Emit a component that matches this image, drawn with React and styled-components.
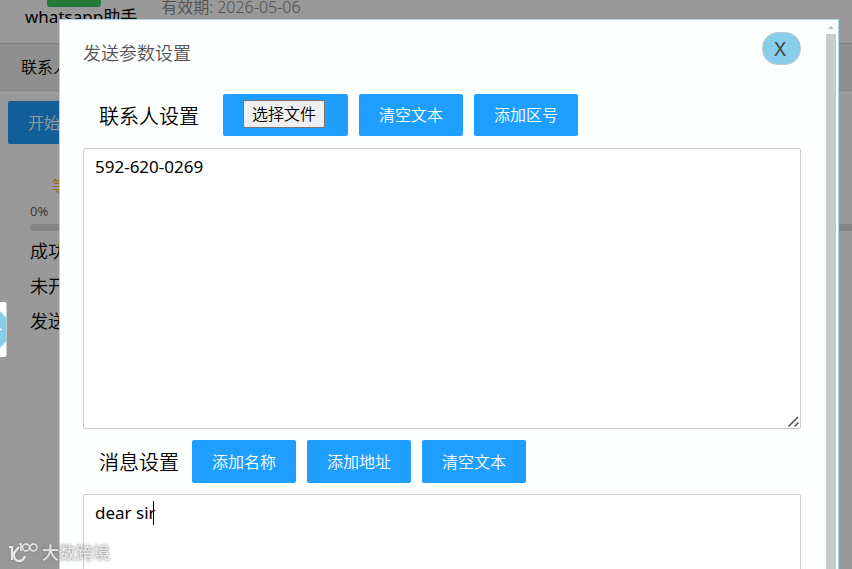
import { useRef, useState } from "react";
import styled, { createGlobalStyle } from "styled-components";

const GlobalStyle = createGlobalStyle`
*{
    box-sizing: border-box;
}
body{
    margin: 0;
    background: #ffffff;
    color: #000000;
    font-family: "Noto Sans", "Noto Sans CJK SC", sans-serif;
    font-size: 16px;
    font-weight: 350;
    line-height: 24px;
    overflow: hidden;
}
button, textarea{
    font-family: inherit;
    font-weight: inherit;
}
`;
const Page = styled.div`
display: flex;
flex-direction: column;
min-height: 100vh;
overflow: hidden;
`;
const Header = styled.header`
display: flex;
align-items: flex-start;
gap: 24px;
height: 44px;
padding-left: 25px;
border-bottom: 1px solid #d2d2d2;
`;
const Brand = styled.div`
display: flex;
flex-direction: column;
font-size: 17px;
font-weight: 400;
line-height: 20px;
`;
const Badge = styled.div`
width: 54px;
height: 7px;
margin-left: 22px;
border-radius: 0 0 3px 3px;
background: #3ccb5a;
`;
const Expiry = styled.div`
line-height: 14px;
font-size: 16px;
color: #888888;
`;
const Nav = styled.nav`
display: flex;
align-items: center;
height: 47px;
padding-left: 21px;
background: #eeeeee;
border-bottom: 1px solid #dcdcdc;
`;
const NavLink = styled.a`
color: #000000;
text-decoration: none;
`;
const Content = styled.main`
display: flex;
flex-direction: column;
align-items: flex-start;
padding: 10px 0 0 8px;
`;
const Button = styled.button`
height: ${(props)=>(props.$tall ? "43px" : "42px")};
padding: 0 20px 2px;
border: none;
border-radius: 2px;
background: #1e9fff;
color: #ffffff;
font-size: 16px;
white-space: nowrap;
cursor: pointer;
&:hover{
    opacity: 0.8;
}
`;
const Status = styled.div`
display: flex;
flex-direction: column;
align-self: stretch;
padding: 30px 0 0 22px;
`;
const Waiting = styled.div`
padding-left: 22px;
color: #ffb800;
`;
const Percent = styled.div`
font-size: 13px;
font-weight: 400;
line-height: 26px;
color: #666666;
`;
const Progress = styled.div`
height: 7px;
margin-bottom: 3px;
border-radius: 7px 0 0 7px;
background: #dedede;
`;
const Line = styled.div`
font-size: 18px;
line-height: 35px;
`;
const Shade = styled.div`
position: fixed;
inset: 0;
background: rgba(0, 0, 0, 0.4);
`;
const Modal = styled.section`
position: fixed;
inset: 19px 13px 0 59px;
display: flex;
border: 1px solid #add8e6;
border-bottom: none;
background: #fdffff;
overflow: hidden;
`;
const ModalBody = styled.div`
flex: 1;
display: flex;
flex-direction: column;
min-width: 0;
padding: 12px 25px 0 23px;
`;
const TitleRow = styled.div`
display: flex;
justify-content: space-between;
align-items: flex-end;
margin-bottom: 29px;
`;
const Title = styled.h1`
margin: 0;
font-size: 18px;
line-height: 24px;
font-weight: inherit;
color: #555555;
`;
const CloseButton = styled.button`
width: 39px;
height: 33px;
padding: 0 3px 0 0;
border: 1px solid #c0c4c8;
border-radius: 16px;
background: #87ceeb;
color: #444444;
font-size: 20px;
font-weight: 400;
cursor: pointer;
`;
const Toolbar = styled.div`
display: flex;
align-items: flex-start;
gap: 11px;
height: 43px;
padding-left: 16px;
`;
const Label = styled.label`
font-size: 20px;
line-height: 46px;
white-space: nowrap;
margin-right: ${(props)=>(props.$wide ? "13px" : "2px")};
`;
const FileBox = styled.div`
display: flex;
width: 125px;
height: 42px;
padding: 6px 20px 8px;
border-radius: 2px;
background: #1e9fff;
`;
const FileButton = styled.button`
padding: 0 8px;
border: 1px solid #767676;
border-radius: 2px;
background: #efefef;
color: #000000;
font-size: 16px;
line-height: 24px;
white-space: nowrap;
`;
const Field = styled.div`
position: relative;
display: flex;
margin: 11px 0;
`;
const TextArea = styled.textarea`
flex: 1;
height: 281px;
padding: 6px 11px;
border: 1px solid #cccccc;
border-radius: 2px;
outline: none;
background: #ffffff;
color: #000000;
font-size: 17px;
font-weight: 400;
line-height: 24px;
resize: none;
`;
const Grip = styled.svg`
position: absolute;
right: 1px;
bottom: 1px;
`;
const Caret = styled.span`
position: absolute;
left: 70px;
top: 7px;
width: 1px;
height: 24px;
background: #000000;
`;
const ScrollBar = styled.div`
display: flex;
flex-direction: column;
width: 10px;
margin-right: 2px;
`;
const ScrollArrow = styled.svg`
flex: none;
`;
const Thumb = styled.div`
flex: 1;
background: #c8cbcb;
`;
const SideTab = styled.svg`
position: fixed;
left: 0;
top: 302px;
`;
const Watermark = styled.div`
position: fixed;
left: 8px;
bottom: 4px;
display: flex;
align-items: center;
gap: 4px;
color: #e6e6e6;
font-size: 17px;
font-weight: 500;
text-shadow: 0 0 3px #777777;
pointer-events: none;
svg{
    filter: drop-shadow(0 0 1px #777777);
}
`;

const Background = ()=>{
    return(
        <Page>
            <Header>
                <Brand>
                    <Badge/>
                    whatsapp助手
                </Brand>
                <Expiry>有效期: 2026-05-06</Expiry>
            </Header>
            <Nav><NavLink href="#contacts">联系人</NavLink></Nav>
            <Content>
                <Button $tall>开始发送</Button>
                <Status>
                    <Waiting>等待</Waiting>
                    <Percent>0%</Percent>
                    <Progress/>
                    <Line>成功</Line>
                    <Line>未开始</Line>
                    <Line>发送</Line>
                </Status>
            </Content>
        </Page>
    )
}

const ContactSettings = ()=>{
    const [contacts, setContacts] = useState("592-620-0269");
    const file = useRef(null);
    return(
        <>
            <Toolbar>
                <Label htmlFor="contacts" $wide>联系人设置</Label>
                <FileBox>
                    <FileButton onClick={()=>file.current.click()}>选择文件</FileButton>
                    <input ref={file} type="file" aria-label="选择文件" hidden/>
                </FileBox>
                <Button onClick={()=>setContacts("")}>清空文本</Button>
                <Button>添加区号</Button>
            </Toolbar>
            <Field>
                <TextArea id="contacts" spellCheck={false} value={contacts} onChange={(e)=>setContacts(e.target.value)}/>
                <Grip width="13" height="13" viewBox="0 0 13 13" fill="none" stroke="#555555" strokeWidth="1.6">
                    <path d="M1.5 11.5L11 2M7.5 11.5L11.5 7.5"/>
                </Grip>
            </Field>
        </>
    )
}

const MessageSettings = ()=>{
    const [message, setMessage] = useState("dear sir");
    return(
        <>
            <Toolbar>
                <Label htmlFor="message">消息设置</Label>
                <Button $tall>添加名称</Button>
                <Button $tall>添加地址</Button>
                <Button $tall onClick={()=>setMessage("")}>清空文本</Button>
            </Toolbar>
            <Field>
                <TextArea id="message" spellCheck={false} value={message} onChange={(e)=>setMessage(e.target.value)}/>
                {message === "dear sir" && <Caret/>}
            </Field>
        </>
    )
}

export default function App(){
    return(
        <>
            <GlobalStyle/>
            <Background/>
            <Shade/>
            <SideTab width="7" height="55" viewBox="0 0 7 55">
                <rect x="-4" width="10.5" height="55" rx="2" fill="#ffffff"/>
                <path d="M0 9L6.3 16V39L0 46Z" fill="#87ceeb"/>
                <path d="M0 26L2 27.5L0 29Z" fill="#ffffff"/>
            </SideTab>
            <Modal role="dialog" aria-labelledby="title">
                <ModalBody>
                    <TitleRow>
                        <Title id="title">发送参数设置</Title>
                        <CloseButton>X</CloseButton>
                    </TitleRow>
                    <ContactSettings/>
                    <MessageSettings/>
                </ModalBody>
                <ScrollBar>
                    <ScrollArrow width="10" height="14" viewBox="0 0 10 14">
                        <path d="M2 9L5 6L8 9Z" fill="#b8bbbb"/>
                    </ScrollArrow>
                    <Thumb/>
                </ScrollBar>
            </Modal>
            <Watermark>
                <svg width="30" height="24" viewBox="0 0 30 24" fill="none" stroke="#e6e6e6" strokeWidth="1.6">
                    <path d="M1 6H4V19" strokeWidth="2.2"/>
                    <path d="M11 6L6 12C5 17 8 20 11 20C14 20 16 18 17 15" strokeWidth="2.4"/>
                    <path d="M11 3H13V10"/>
                    <circle cx="18" cy="6.5" r="3.5"/>
                    <circle cx="25.5" cy="6.5" r="3.5"/>
                </svg>
                大数跨境
            </Watermark>
        </>
    )
}
